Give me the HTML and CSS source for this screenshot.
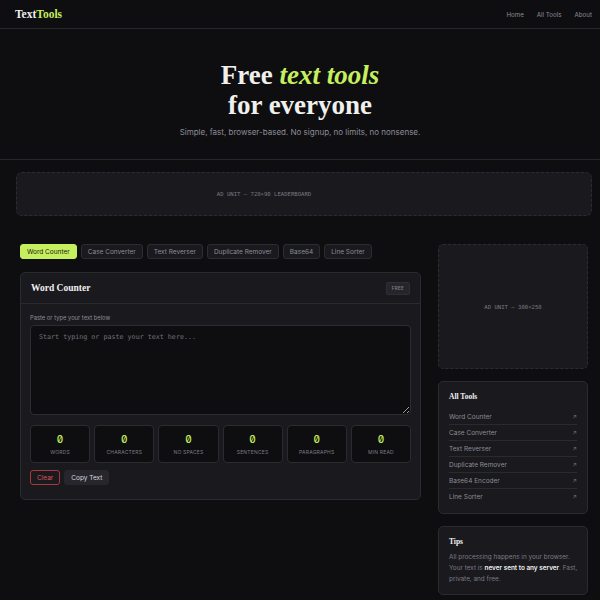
FILE: index.html
```html
<!DOCTYPE html>
<html lang="en">
<head>
    <meta charset="UTF-8">
    <title>TextTools — Free text tools</title>
    <link rel="stylesheet" href="styles.css">
</head>
<body>
    <header class="site-header">
        <div class="logo">Text<span>Tools</span></div>
        <nav class="nav">
            <a href="#">Home</a>
            <a href="#">All Tools</a>
            <a href="#">About</a>
        </nav>
    </header>

    <section class="hero">
        <h1>Free <em>text tools</em><br>for everyone</h1>
        <p>Simple, fast, browser-based. No signup, no limits, no nonsense.</p>
    </section>

    <div class="ad-wrap">
        <div class="ad ad-leader">AD UNIT — 728×90 LEADERBOARD</div>
    </div>

    <main class="layout">
        <div class="main-col">
            <div class="tabs">
                <button class="tab active">Word Counter</button>
                <button class="tab">Case Converter</button>
                <button class="tab">Text Reverser</button>
                <button class="tab">Duplicate Remover</button>
                <button class="tab">Base64</button>
                <button class="tab">Line Sorter</button>
            </div>

            <div class="card tool">
                <div class="tool-head">
                    <h2>Word Counter</h2>
                    <span class="badge">FREE</span>
                </div>
                <div class="tool-body">
                    <label class="field-label" for="input">Paste or type your text below</label>
                    <textarea id="input" placeholder="Start typing or paste your text here..."></textarea>

                    <div class="stats">
                        <div class="stat"><div class="stat-val">0</div><div class="stat-label">Words</div></div>
                        <div class="stat"><div class="stat-val">0</div><div class="stat-label">Characters</div></div>
                        <div class="stat"><div class="stat-val">0</div><div class="stat-label">No spaces</div></div>
                        <div class="stat"><div class="stat-val">0</div><div class="stat-label">Sentences</div></div>
                        <div class="stat"><div class="stat-val">0</div><div class="stat-label">Paragraphs</div></div>
                        <div class="stat"><div class="stat-val">0</div><div class="stat-label">Min read</div></div>
                    </div>

                    <div class="actions">
                        <button class="btn btn-clear">Clear</button>
                        <button class="btn">Copy Text</button>
                    </div>
                </div>
            </div>
        </div>

        <aside class="sidebar">
            <div class="ad ad-box">AD UNIT — 300×250</div>

            <div class="card side-card">
                <h3>All Tools</h3>
                <ul class="tool-list">
                    <li><span>Word Counter</span><span class="arrow">↗</span></li>
                    <li><span>Case Converter</span><span class="arrow">↗</span></li>
                    <li><span>Text Reverser</span><span class="arrow">↗</span></li>
                    <li><span>Duplicate Remover</span><span class="arrow">↗</span></li>
                    <li><span>Base64 Encoder</span><span class="arrow">↗</span></li>
                    <li><span>Line Sorter</span><span class="arrow">↗</span></li>
                </ul>
            </div>

            <div class="card side-card tips">
                <h3>Tips</h3>
                <p>All processing happens in your browser. Your text is <strong>never sent to any server</strong>. Fast, private, and free.</p>
            </div>
        </aside>
    </main>
</body>
</html>
```

FILE: styles.css
```css
body {
    margin: 0;
    background-color: #0e0e11;
    color: #e8e8ea;
    font-family: Inter, "Noto Sans", sans-serif;
}
.site-header {
    height: 28px;
    display: flex;
    align-items: center;
    justify-content: space-between;
    padding: 0 8px 0 15px;
    border-bottom: 1px solid #26262c;
}
.logo {
    font-family: "Liberation Serif", serif;
    font-weight: bold;
    font-size: 11.5px;
    color: #f0f0f0;
}
.logo span {
    color: #c5ef5e;
}
.nav {
    display: flex;
    gap: 13px;
}
.nav a {
    color: #8d8d96;
    text-decoration: none;
    font-size: 6.2px;
}
.hero {
    text-align: center;
    padding: 31px 0 21px;
    border-bottom: 1px solid #26262c;
}
.hero h1 {
    margin: 0;
    font-family: "Liberation Serif", serif;
    font-weight: bold;
    font-size: 27px;
    line-height: 30px;
    color: #f0f0ec;
}
.hero h1 em {
    color: #c5ef5e;
}
.hero p {
    margin: 6px 0 0;
    font-size: 8px;
    line-height: 12px;
    color: #8d8d96;
}
.ad-wrap {
    padding: 12px 8px 0 16px;
}
.ad {
    display: flex;
    align-items: center;
    justify-content: center;
    background-color: #19191e;
    border: 1px dashed #2c2c33;
    border-radius: 6px;
    font-family: "DejaVu Sans Mono", monospace;
    font-size: 5.6px;
    color: #7a7a82;
}
.ad-leader {
    height: 42px;
    padding-right: 80px;
}
.layout {
    display: grid;
    grid-template-columns: 401px 150px;
    gap: 17px;
    padding: 28px 12px 20px 20px;
}
.tabs {
    display: flex;
    gap: 4px;
    margin-bottom: 13px;
}
.tab {
    height: 15px;
    padding: 0 6px;
    background-color: #19191e;
    border: 1px solid #2c2c33;
    border-radius: 3px;
    color: #8d8d96;
    font-family: Inter, "Noto Sans", sans-serif;
    font-size: 6.5px;
}
.tab.active {
    background-color: #c5ef5e;
    border-color: #c5ef5e;
    color: #1a1a1a;
}
.card {
    background-color: #19191e;
    border: 1px solid #2a2a31;
    border-radius: 5px;
}
.tool-head {
    height: 30px;
    display: flex;
    align-items: center;
    justify-content: space-between;
    padding: 0 10px;
    border-bottom: 1px solid #2a2a31;
}
.tool-head h2 {
    margin: 0;
    font-family: "Liberation Serif", serif;
    font-size: 9.5px;
    color: #f0f0f0;
}
.badge {
    padding: 3px 5px;
    background-color: #25252b;
    border: 1px solid #2e2e35;
    border-radius: 2px;
    font-size: 4.5px;
    font-weight: 600;
    letter-spacing: 0.3px;
    color: #7b7b84;
}
.tool-body {
    padding: 10px 9px 14px;
}
.field-label {
    display: block;
    font-size: 5.8px;
    line-height: 8px;
    color: #8d8d96;
    margin-bottom: 3px;
}
textarea {
    display: block;
    box-sizing: border-box;
    width: 100%;
    height: 90px;
    padding: 7px 8px;
    background-color: #0e0e11;
    border: 1px solid #2c2c33;
    border-radius: 4px;
    color: #e8e8ea;
    font-family: "DejaVu Sans Mono", monospace;
    font-size: 6.7px;
    resize: vertical;
}
textarea::placeholder {
    color: #70707a;
}
.stats {
    display: grid;
    grid-template-columns: repeat(6, 1fr);
    gap: 4px;
    margin-top: 10px;
}
.stat {
    height: 36px;
    display: flex;
    flex-direction: column;
    align-items: center;
    justify-content: center;
    gap: 5px;
    background-color: #0e0e11;
    border: 1px solid #2a2a31;
    border-radius: 4px;
}
.stat-val {
    font-family: Inter, monospace;
    font-feature-settings: "zero" 1, "tnum" 1;
    font-weight: 500;
    font-size: 10px;
    line-height: 10px;
    color: #c5ef5e;
}
.stat-label {
    font-size: 5px;
    letter-spacing: 0.2px;
    text-transform: uppercase;
    color: #7b7b84;
}
.actions {
    display: flex;
    gap: 4px;
    margin-top: 7px;
}
.btn {
    height: 15px;
    padding: 0 6px;
    background-color: #26262c;
    border: 1px solid #26262c;
    border-radius: 3px;
    color: #d8d8dc;
    font-family: Inter, "Noto Sans", sans-serif;
    font-size: 6.5px;
}
.btn-clear {
    background-color: transparent;
    border-color: #a53a3e;
    color: #d9575b;
}
.sidebar {
    display: flex;
    flex-direction: column;
    gap: 12px;
}
.ad-box {
    height: 123px;
    border-radius: 5px;
}
.side-card {
    padding: 10px 10px 9px;
}
.side-card h3 {
    margin: 0 0 7px;
    font-family: "Liberation Serif", serif;
    font-size: 7.5px;
    line-height: 10px;
    color: #f0f0f0;
}
.tool-list {
    list-style: none;
    margin: 0;
    padding: 0;
}
.tool-list li {
    display: flex;
    justify-content: space-between;
    align-items: center;
    height: 15px;
    border-bottom: 1px solid #2a2a31;
    font-size: 6.5px;
    color: #8d8d96;
}
.tool-list li:last-child {
    border-bottom: none;
}
.arrow {
    font-size: 6px;
    color: #6e6e77;
}
.tips {
    padding-right: 5px;
}
.tips h3 {
    margin-bottom: 5px;
}
.tips p {
    margin: 0;
    font-size: 6.4px;
    line-height: 11px;
    color: #7b7b84;
}
.tips strong {
    font-weight: 600;
    color: #f0f0f0;
}
```
